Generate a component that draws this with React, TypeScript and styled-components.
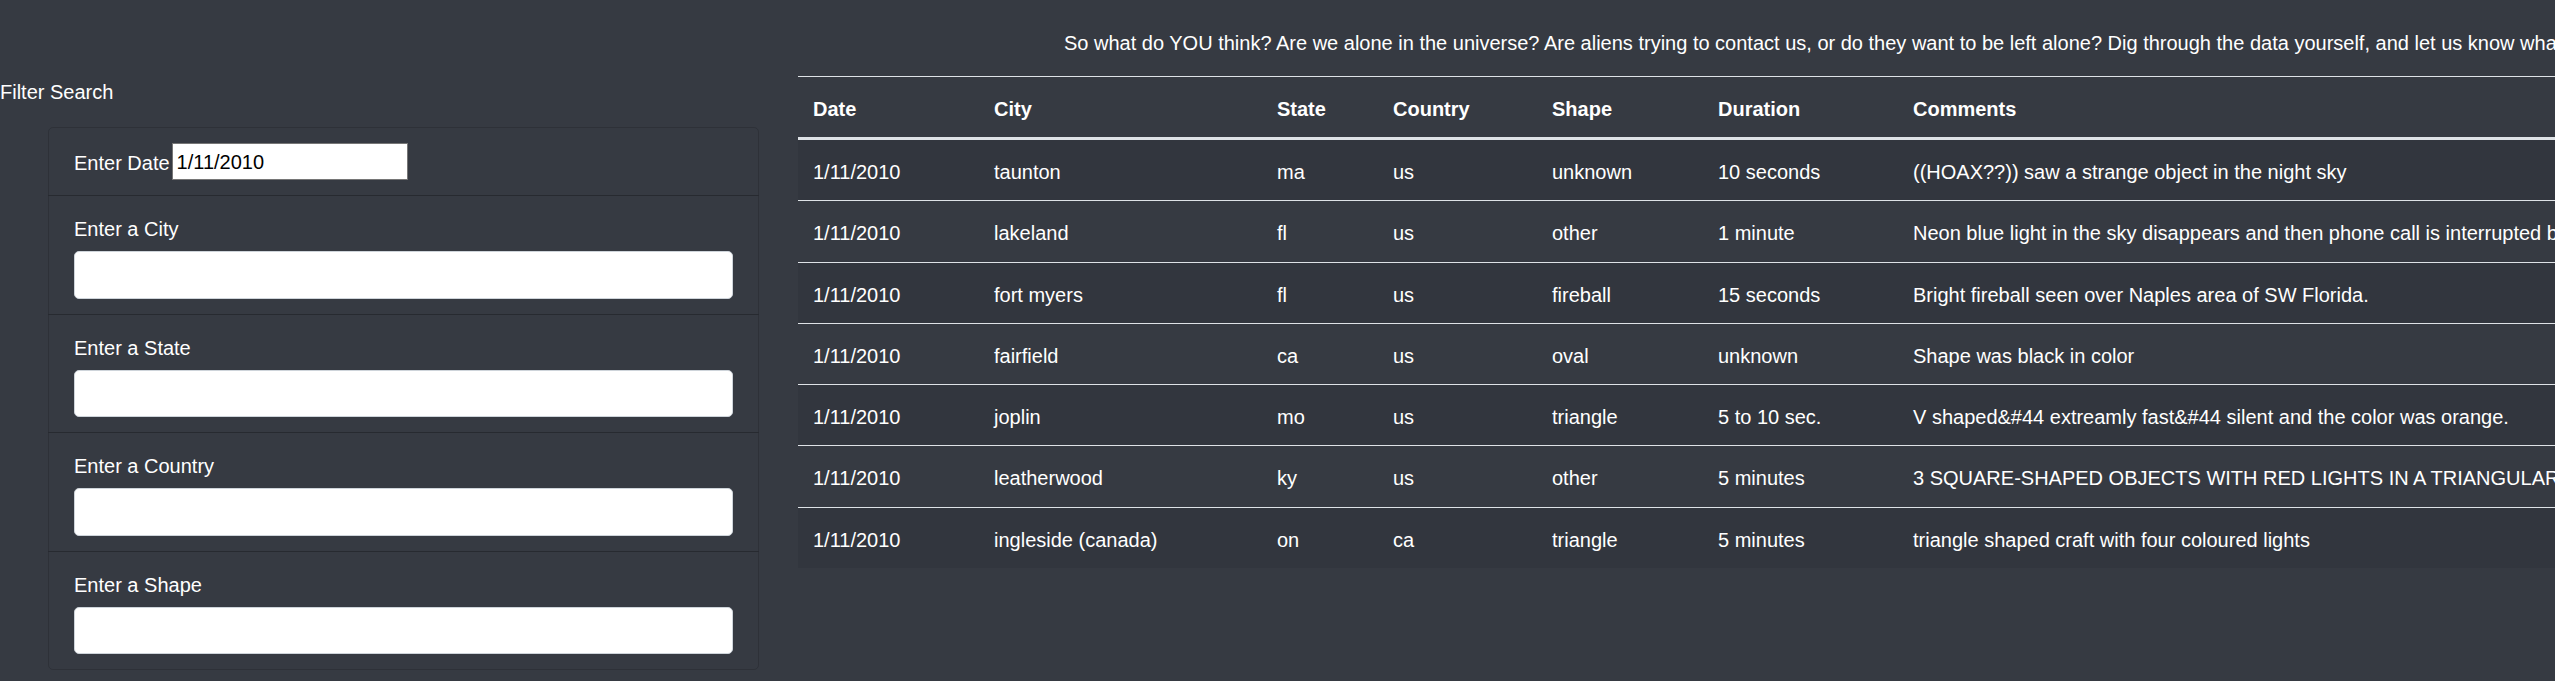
import React from "react";
import styled, { createGlobalStyle } from "styled-components";

const GlobalStyle = createGlobalStyle`
  html, body {
    margin: 0;
    padding: 0;
    background: #363a42;
    overflow: hidden;
  }

  body {
    font-family: "Liberation Sans", Arial, sans-serif;
    font-size: 20px;
    line-height: 30px;
    color: #ffffff;
  }
`;

type Sighting = {
  datetime: string;
  city: string;
  state: string;
  country: string;
  shape: string;
  duration: string;
  comments: string;
};

const sightings: Sighting[] = [
  { datetime: "1/11/2010", city: "taunton", state: "ma", country: "us", shape: "unknown", duration: "10 seconds", comments: "((HOAX??)) saw a strange object in the night sky" },
  { datetime: "1/11/2010", city: "lakeland", state: "fl", country: "us", shape: "other", duration: "1 minute", comments: "Neon blue light in the sky disappears and then phone call is interrupted by static" },
  { datetime: "1/11/2010", city: "fort myers", state: "fl", country: "us", shape: "fireball", duration: "15 seconds", comments: "Bright fireball seen over Naples area of SW Florida." },
  { datetime: "1/11/2010", city: "fairfield", state: "ca", country: "us", shape: "oval", duration: "unknown", comments: "Shape was black in color" },
  { datetime: "1/11/2010", city: "joplin", state: "mo", country: "us", shape: "triangle", duration: "5 to 10 sec.", comments: "V shaped&#44 extreamly fast&#44 silent and the color was orange." },
  { datetime: "1/11/2010", city: "leatherwood", state: "ky", country: "us", shape: "other", duration: "5 minutes", comments: "3 SQUARE-SHAPED OBJECTS WITH RED LIGHTS IN A TRIANGULAR FORMATION" },
  { datetime: "1/11/2010", city: "ingleside (canada)", state: "on", country: "ca", shape: "triangle", duration: "5 minutes", comments: "triangle shaped craft with four coloured lights" },
];

const columns = [
  { label: "Date", width: 181 },
  { label: "City", width: 283 },
  { label: "State", width: 116 },
  { label: "Country", width: 159 },
  { label: "Shape", width: 166 },
  { label: "Duration", width: 195 },
  { label: "Comments", width: 1400 },
];

const filters = ["Enter a City", "Enter a State", "Enter a Country", "Enter a Shape"];

function App() {
  return (
    <>
      <GlobalStyle />
      <Page>
        <FilterColumn>
          <FilterTitle>Filter Search</FilterTitle>
          <FilterList>
            <DateItem>
              <InlineLabel htmlFor="datetime">Enter Date</InlineLabel>
              <DateInput id="datetime" type="text" defaultValue="1/11/2010" />
            </DateItem>
            {filters.map((label) => (
              <FilterItem key={label}>
                <BlockLabel>{label}</BlockLabel>
                <FormInput type="text" />
              </FilterItem>
            ))}
          </FilterList>
        </FilterColumn>

        <TableColumn>
          <Intro>
            So what do YOU think? Are we alone in the universe? Are aliens trying to contact us, or do they want to be left
            alone? Dig through the data yourself, and let us know what you find!
          </Intro>
          <Table>
            <colgroup>
              {columns.map((c) => (
                <col key={c.label} style={{ width: c.width }} />
              ))}
            </colgroup>
            <thead>
              <tr>
                {columns.map((c) => (
                  <HeadCell key={c.label}>{c.label}</HeadCell>
                ))}
              </tr>
            </thead>
            <tbody>
              {sightings.map((s, i) => (
                <Row key={i} $striped={i % 2 === 0}>
                  <Cell>{s.datetime}</Cell>
                  <Cell>{s.city}</Cell>
                  <Cell>{s.state}</Cell>
                  <Cell>{s.country}</Cell>
                  <Cell>{s.shape}</Cell>
                  <Cell>{s.duration}</Cell>
                  <Cell>{s.comments}</Cell>
                </Row>
              ))}
            </tbody>
          </Table>
        </TableColumn>
      </Page>
    </>
  );
}

export default App;

const Page = styled.main`
  width: 100vw;
  height: 100vh;
  overflow: hidden;

  display: flex;
  flex-direction: row;
  align-items: flex-start;
`;

const FilterColumn = styled.div`
  flex: 0 0 798px;
  padding-top: 77px;
  box-sizing: border-box;

  display: flex;
  flex-direction: column;
`;

const FilterTitle = styled.h5`
  margin: 0 0 20px 0;
  font-size: 20px;
  font-weight: 400;
  line-height: 30px;
  white-space: nowrap;
`;

const FilterList = styled.ul`
  list-style: none;
  margin: 0 0 0 48px;
  padding: 0;
  width: 711px;

  display: flex;
  flex-direction: column;
`;

const FilterItem = styled.li`
  padding: 15px 25px;
  border: 1px solid rgba(0, 0, 0, 0.14);
  margin-bottom: -1px;

  &:last-child {
    margin-bottom: 0;
    border-bottom-left-radius: 5px;
    border-bottom-right-radius: 5px;
  }
`;

const DateItem = styled(FilterItem)`
  display: flex;
  align-items: center;
  gap: 2px;
  border-top-left-radius: 5px;
  border-top-right-radius: 5px;
`;

const InlineLabel = styled.label`
  font-size: 20px;
  line-height: 30px;
  padding-top: 3px;
  white-space: nowrap;
`;

const BlockLabel = styled.label`
  display: block;
  font-size: 20px;
  line-height: 30px;
  padding-top: 3px;
  margin-bottom: 7px;
`;

const DateInput = styled.input`
  box-sizing: border-box;
  width: 236px;
  height: 37px;
  padding: 2px 4px 0;
  border: 1px solid #767676;
  background: #ffffff;
  color: #000000;
  font-family: "Liberation Sans", Arial, sans-serif;
  font-size: 20px;
  outline: none;
`;

const FormInput = styled.input`
  display: block;
  box-sizing: border-box;
  width: 100%;
  height: 47.5px;
  padding: 7px 15px;
  border: 1px solid #ced4da;
  border-radius: 5px;
  background: #ffffff;
  color: #495057;
  font-family: "Liberation Sans", Arial, sans-serif;
  font-size: 20px;
  outline: none;
`;

const TableColumn = styled.div`
  flex: 0 0 auto;
  padding-top: 28px;

  display: flex;
  flex-direction: column;
`;

const Intro = styled.p`
  margin: 0 0 18px 0;
  padding-left: 266px;
  font-size: 20px;
  line-height: 30px;
  white-space: nowrap;
`;

const Table = styled.table`
  border-collapse: collapse;
  table-layout: fixed;
  width: 2500px;
  color: #ffffff;
`;

const HeadCell = styled.th`
  padding: 17px 15px 13px;
  text-align: left;
  font-weight: 700;
  line-height: 30px;
  white-space: nowrap;
  border-top: 1px solid #dee2e6;
  border-bottom: 3px solid #dee2e6;
`;

const Row = styled.tr<{ $striped: boolean }>`
  background: ${({ $striped }) => ($striped ? "rgba(0, 0, 0, 0.06)" : "transparent")};

  & + & {
    border-top: 1px solid #dee2e6;
  }
`;

const Cell = styled.td`
  padding: 17px 15px 13px;
  line-height: 30.3px;
  white-space: nowrap;
  overflow: hidden;
`;
